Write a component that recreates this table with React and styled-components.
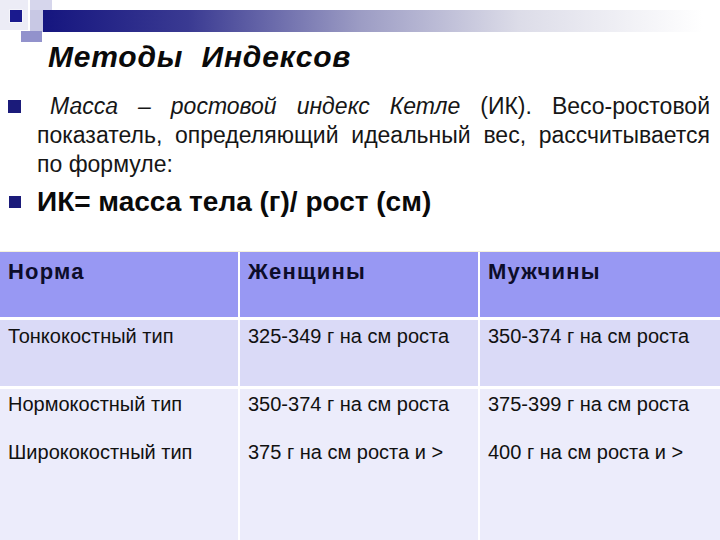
import React from "react";
import styled, { createGlobalStyle } from "styled-components";

const Global = createGlobalStyle`
  html, body { margin: 0; padding: 0; background: #ffffff; }
  body { font-family: "Liberation Sans", Arial, sans-serif; }
`;

const Page = styled.div`
  width: 720px;
  height: 540px;
  overflow: hidden;
  background: #ffffff;
  display: flex;
  flex-direction: column;
  font-family: "Liberation Sans", Arial, sans-serif;
`;

const Band = styled.svg`
  display: block;
  width: 720px;
  height: 38px;
  overflow: visible;
`;

const Title = styled.h1`
  margin: 3px 0 0 0;
  padding-left: 48px;
  font-size: 30px;
  line-height: 32px;
  letter-spacing: 0.8px;
  font-weight: bold;
  font-style: italic;
  color: #0a0a0a;
  white-space: pre;
`;

const List = styled.ul`
  list-style: none;
  margin: 19px 0 0 0;
  padding: 0;
  display: flex;
  flex-direction: column;
  gap: 6px;
`;

const Item = styled.li`
  display: flex;
  align-items: flex-start;
`;

const Bullet = styled.span`
  flex: 0 0 auto;
  width: ${(p) => p.$size}px;
  height: ${(p) => p.$size}px;
  margin-left: ${(p) => p.$left}px;
  margin-right: ${(p) => 37 - p.$left - p.$size}px;
  margin-top: ${(p) => p.$top}px;
  background: #1b1b7a;
`;

const Paragraph = styled.div`
  flex: 1;
  padding-right: 10px;
  font-size: 23px;
  line-height: 29px;
  color: #161616;
`;

const Line = styled.span`
  display: block;
  white-space: nowrap;
  text-align: ${(p) => (p.$last ? "left" : "justify")};
  text-align-last: ${(p) => (p.$last ? "left" : "justify")};
  text-indent: ${(p) => p.$indent || 0}px;
`;

const Formula = styled.div`
  font-size: 28px;
  line-height: 34px;
  font-weight: bold;
  color: #0a0a0a;
`;

const Table = styled.div`
  margin-top: 32px;
  border-top: 1px solid #f4f0dc;
  display: grid;
  grid-template-columns: 238px 238px 1fr;
  grid-template-rows: 65px 66px 1fr;
  column-gap: 2px;
  row-gap: 3px;
  flex: 1;
  background: #ffffff;
`;

const Cell = styled.div`
  background: ${(p) => p.$bg};
  padding: ${(p) => p.$pt}px 8px 0 8px;
  display: flex;
  flex-direction: column;
  gap: 24px;
`;

const HeadText = styled.span`
  font-size: 22px;
  line-height: 24px;
  letter-spacing: 1.2px;
  font-weight: bold;
  color: #0d0d2a;
`;

const CellText = styled.span`
  font-size: 20px;
  line-height: 24px;
  color: #111111;
  white-space: nowrap;
`;

const HEAD = "#9898f3";
const ROW1 = "#dadaf7";
const ROW2 = "#ececfb";

export default function App() {
  return (
    <Page>
      <Global />
      <Band viewBox="0 0 720 38">
        <defs>
          <linearGradient id="barGrad" x1="0" y1="0" x2="1" y2="0">
            <stop offset="0" stopColor="#15157f" />
            <stop offset="0.22" stopColor="#3a3a92" />
            <stop offset="0.48" stopColor="#9c9cc4" />
            <stop offset="0.72" stopColor="#dcdce8" />
            <stop offset="1" stopColor="#ffffff" />
          </linearGradient>
        </defs>
        <rect x="0" y="0" width="28" height="30" fill="#ececf6" />
        <rect x="30" y="0" width="22" height="10" fill="#d6d6ec" />
        <rect x="43" y="10" width="660" height="22" fill="url(#barGrad)" />
        <rect x="30" y="10" width="13" height="22" fill="#c8c8e4" />
        <rect x="9" y="9" width="14" height="14" fill="#f4f4fa" />
        <rect x="10" y="10" width="12" height="12" fill="#1a1a8e" />
        <rect x="21" y="31" width="21" height="11" fill="#9292cc" />
      </Band>
      <Title>{"Методы  Индексов"}</Title>
      <List>
        <Item>
          <Bullet $size={13} $left={8} $top={7.5} />
          <Paragraph>
            <Line $indent={13}>
              <i>Масса – ростовой индекс Кетле</i> (ИК). Весо-ростовой
            </Line>
            <Line>показатель, определяющий идеальный вес, рассчитывается</Line>
            <Line $last>по формуле:</Line>
          </Paragraph>
        </Item>
        <Item>
          <Bullet $size={12} $left={9} $top={11} />
          <Formula>ИК= масса тела (г)/ рост (см)</Formula>
        </Item>
      </List>
      <Table>
        <Cell $bg={HEAD} $pt={8}><HeadText>Норма</HeadText></Cell>
        <Cell $bg={HEAD} $pt={8}><HeadText>Женщины</HeadText></Cell>
        <Cell $bg={HEAD} $pt={8}><HeadText>Мужчины</HeadText></Cell>
        <Cell $bg={ROW1} $pt={4}><CellText>Тонкокостный тип</CellText></Cell>
        <Cell $bg={ROW1} $pt={4}><CellText>325-349 г на см роста</CellText></Cell>
        <Cell $bg={ROW1} $pt={4}><CellText>350-374 г на см роста</CellText></Cell>
        <Cell $bg={ROW2} $pt={3}>
          <CellText>Нормокостный тип</CellText>
          <CellText>Ширококостный тип</CellText>
        </Cell>
        <Cell $bg={ROW2} $pt={3}>
          <CellText>350-374 г на см роста</CellText>
          <CellText>375 г на см роста и &gt;</CellText>
        </Cell>
        <Cell $bg={ROW2} $pt={3}>
          <CellText>375-399 г на см роста</CellText>
          <CellText>400 г на см роста и &gt;</CellText>
        </Cell>
      </Table>
    </Page>
  );
}
